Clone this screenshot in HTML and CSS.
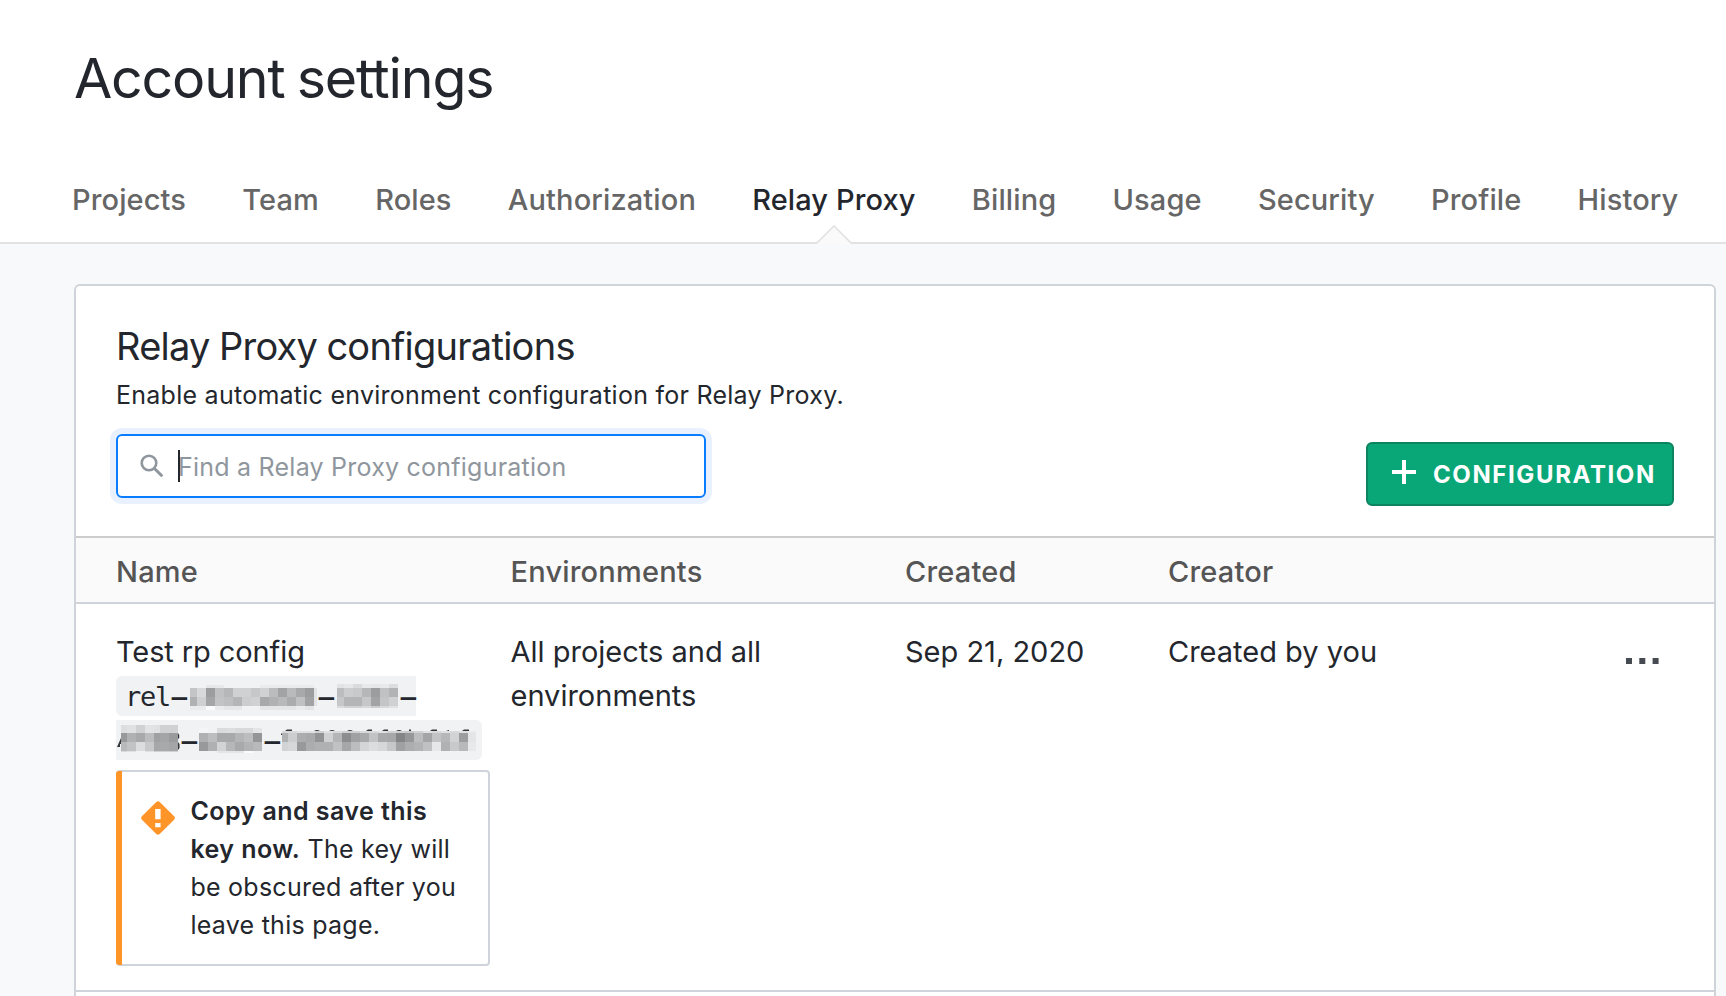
FILE: index.html
```html
<!DOCTYPE html>
<html lang="en">
<head>
<meta charset="utf-8">
<title>Account settings</title>
<link rel="stylesheet" href="styles.css">
</head>
<body>
<header class="header">
  <h1 class="title">Account settings</h1>
  <nav class="tabs">
    <a class="tab">Projects</a>
    <a class="tab">Team</a>
    <a class="tab">Roles</a>
    <a class="tab">Authorization</a>
    <a class="tab active">Relay Proxy
      <svg class="pointer" width="34" height="19" viewBox="0 0 34 19"><path d="M0 18.5 L17 1 L34 18.5 V19 H0Z" fill="#fafafa"/><path d="M0 18 L17 1 L34 18" fill="none" stroke="#e2e2e2" stroke-width="1.6"/></svg>
    </a>
    <a class="tab">Billing</a>
    <a class="tab">Usage</a>
    <a class="tab">Security</a>
    <a class="tab">Profile</a>
    <a class="tab">History</a>
  </nav>
</header>
<main class="main">
  <section class="card">
    <div class="card-top">
      <h2 class="card-title">Relay Proxy configurations</h2>
      <p class="card-sub">Enable automatic environment configuration for Relay Proxy.</p>
      <div class="toolbar">
        <div class="search">
          <svg class="search-icon" width="24" height="24" viewBox="0 0 24 24" fill="none" stroke="#8f969d"><circle cx="9" cy="9" r="7.3" stroke-width="2.6"/><path d="M14.2 14.2 L22.3 22.3" stroke-width="3"/></svg>
          <input class="search-input" type="text" placeholder="Find a Relay Proxy configuration">
          <span class="caret"></span>
        </div>
        <button class="button">
          <svg width="24" height="24" viewBox="0 0 24 24"><path d="M12 0V24M0 12H24" stroke="#fff" stroke-width="4"/></svg>
          <span>CONFIGURATION</span>
        </button>
      </div>
    </div>
    <div class="row head">
      <div>Name</div><div>Environments</div><div>Created</div><div>Creator</div><div></div>
    </div>
    <div class="row body">
      <div class="name">
        <div class="config">Test rp config</div>
        <div class="code first"><span class="mono">rel</span><span class="dash">-</span><svg class="mosaic m1" data-block="a"></svg><span class="dash">-</span><svg class="mosaic m2" data-block="b"></svg><span class="dash">-</span></div>
        <div class="code second"><svg class="mosaic m3" data-block="c"></svg><span class="dash">-</span><svg class="mosaic m4" data-block="d"></svg><span class="dash">-</span><svg class="mosaic m5" data-block="e"></svg></div>
        <div class="alert">
          <svg class="alert-icon" width="34" height="34" viewBox="0 0 34 34"><path d="M15.3 .9 Q17 -.6 18.7 .9 L33.1 15.3 Q34.6 17 33.1 18.7 L18.7 33.1 Q17 34.6 15.3 33.1 L.9 18.7 Q-.6 17 .9 15.3Z" fill="#ff9429"/><path d="M14.2 8h5.4v10.2h-5.4zM14.2 22h5.4v4.2h-5.4z" fill="#fff"/></svg>
          <p class="alert-text"><strong>Copy and save this key now.</strong> The key will be obscured after you leave this page.</p>
        </div>
      </div>
      <div class="envs">All projects and all environments</div>
      <div>Sep 21, 2020</div>
      <div>Created by you</div>
      <div class="more"><svg width="34" height="6" viewBox="0 0 34 6" fill="#454b51"><path d="M0 0h6v6H0zM13.3 0h6v6h-6zM26.6 0h6v6h-6z"/></svg></div>
    </div>
  </section>
</main>
<script src="mosaic.js"></script>
</body>
</html>
```
FILE: styles.css
```css
* { box-sizing: border-box; }
body {
  margin: 0;
  height: 996px;
  overflow: hidden;
  background: #f7f9fb;
  color: #23272d;
  font: 400 29px/44px Inter, sans-serif;
}
h1, h2, p { margin: 0; font-weight: 400; }
svg { display: block; flex: none; }
.header {
  height: 244px;
  padding: 48px 0 0 72px;
  background: #fff;
  border-bottom: 2px solid #e2e2e2;
}
.title { padding-left: 2px; font-size: 55.5px; line-height: 60px; letter-spacing: -1.2px; word-spacing: -2px; }
.tabs { display: flex; gap: 56.2px; margin-top: 72px; height: 62px; white-space: nowrap; }
.tab { position: relative; color: #666; font-weight: 500; line-height: 40px; letter-spacing: .12px; }
.tab.active { color: #23272d; }
.pointer { position: absolute; left: 50%; top: 45px; margin-left: -17px; }
.main { padding: 40px 10px 0 74px; }
.card {
  height: 740px;
  background: #fff;
  border: 2px solid #cfd4da;
  border-radius: 6px;
}
.card-top { height: 250px; padding: 38px 40px 0; }
.card-title { font-size: 38px; line-height: 44px; letter-spacing: -.73px; word-spacing: -.8px; }
.card-sub { margin-top: 8px; font-size: 25px; line-height: 38px; letter-spacing: .26px; }
.toolbar { display: flex; justify-content: space-between; margin-top: 20px; }
.search {
  position: relative;
  display: flex;
  align-items: center;
  width: 590px;
  height: 64px;
  padding-left: 22px;
  border: 2px solid #0a7cff;
  border-radius: 6px;
  box-shadow: 0 0 0 6px #e9f1ff;
}
.search-input {
  flex: 1;
  height: 60px;
  margin-left: 14px;
  padding: 1px 0 0;
  border: 0;
  outline: 0;
  background: none;
  font: 400 25px Inter, sans-serif;
  letter-spacing: .23px;
}
.search-input::placeholder { color: #8f969d; opacity: 1; }
.caret { position: absolute; left: 60px; top: 14px; width: 2px; height: 32px; background: #23272d; }
.button {
  display: flex;
  align-items: center;
  gap: 17px;
  width: 308px;
  height: 64px;
  margin-top: 8px;
  padding: 1px 0 0 24px;
  border: 2px solid #0d8460;
  border-radius: 6px;
  background: #09a778;
  color: #fff;
  font: 700 24px/30px Inter, sans-serif;
  letter-spacing: 1.6px;
}
.button svg { margin-top: -5px; }
.row { display: grid; grid-template-columns: 394.5px 394.5px 263px 1fr 90px; padding-left: 40px; }
.head {
  height: 68px;
  padding-top: 12px;
  border-top: 2px solid #ccc;
  border-bottom: 2px solid #cfd4da;
  background: #fafafa;
  color: #555;
  font-weight: 500;
  letter-spacing: .2px;
}
.body { padding-top: 26px; padding-bottom: 24px; border-bottom: 2px solid #cfd4da; }
.name { width: 374px; }
.config { letter-spacing: -.1px; }
.envs { width: 320px; }
.code { display: flex; height: 40px; background: #f1f2f4; }
.code.first { width: 300px; margin-top: 2px; padding-left: 9px; border-radius: 6px 0 0 6px; }
.code.second { width: 366px; margin-top: 4px; border-radius: 0 6px 6px 0; }
.mono, .dash { height: 38px; font: 27px/38px "DejaVu Sans Mono", monospace; letter-spacing: -1.2px; transform: translateY(2px); }
.mono { width: 47px; }
.dash {
  display: flex;
  justify-content: center;
  width: 15px;
  margin: 0 1px 0 2px;
  letter-spacing: 0;
  transform: translateY(2px) scaleX(1.85);
  font-size: 33px;
}
.mosaic { height: 40px; }
.m1 { width: 127px; margin-left: 2px; }
.m2 { width: 62px; margin-left: 2px; }
.m3 { width: 64px; }
.m4 { width: 64px; margin-left: 1px; }
.m5 { width: 200px; }
.alert {
  position: relative;
  display: flex;
  height: 196px;
  margin-top: 10px;
  padding: 20px 20px 0 23px;
  border: 2px solid #cfd4da;
  border-radius: 4px;
}
.alert::before {
  content: "";
  position: absolute;
  left: -2px;
  top: -1px;
  bottom: -1px;
  width: 6px;
  border-radius: 3px 0 0 3px;
  background: #ff9429;
}
.alert-icon { margin-top: 9px; }
.alert-text { margin-left: 15.4px; font-size: 25px; line-height: 38px; letter-spacing: .26px; }
.alert-text strong { font-weight: 600; letter-spacing: .45px; }
.more { padding: 28px 0 0 2px; }
```
FILE: mosaic.js
```js
// Redaction blocks: column edges, row edges, and one grey level (hex pair) per cell.
const blocks = {
  a: {
    x: [0, 7, 16, 25, 34, 43, 52, 61, 70, 79, 88, 97, 106, 115, 124, 127],
    y: [9, 12, 21, 30, 34],
    g: ["f1 f1 e6 e8 f1 f1 f1 f1 ea ea ea ea ea ea f1",
        "c4 d8 9c c0 b6 d0 d0 c6 d0 bb a2 b9 a8 9c e2",
        "b0 cf a4 c2 be b4 cc d0 a8 b0 b8 ab c0 a2 e2",
        "ea ea fa ea e4 e6 f1 f1 e4 e4 e4 e4 ea e4 f1"]
  },
  b: {
    x: [0, 7, 16, 25, 34, 43, 52, 61],
    y: [8, 12, 21, 30, 32],
    g: ["e2 e6 da e8 e6 e8 dc", "bc cc c8 b6 9c c0 b2", "c6 b4 b4 c6 a2 c4 d0", "da d0 d0 d8 cc d8 e0"]
  },
  c: {
    x: [5, 11, 20, 29, 38, 44, 53, 62],
    y: [5, 13, 22, 31, 32],
    g: ["dc e0 d0 e2 e0 d0 d0", "98 b0 a8 bc a0 a4 9a", "b8 c2 dc c8 a6 a8 a4", "d8 e0 f1 e0 d0 d0 d0"]
  },
  d: {
    x: [0, 9, 18, 27, 36, 45, 54, 63],
    y: [8, 13, 22, 31, 33],
    g: ["f4 f1 da dc d8 d8 e4", "b0 bc a8 a8 b4 bc 94", "98 b0 d2 b6 a8 b2 b8", "f1 f1 e4 e4 e4 fa f1"]
  },
  e: {
    x: [1, 7, 16, 25, 34, 43, 52, 61, 70, 79, 88, 97, 106, 115, 124, 133, 142, 151, 160, 169, 178, 187, 195],
    y: [11, 13, 22, 31],
    g: ["d8 d8 e0 e0 d0 e0 d8 d0 d0 d8 d8 e0 d0 d0 c8 d0 e0 d8 e0 d8 e0 e8",
        "b0 cc ac a8 92 d0 b4 8c a0 a8 c2 a8 a6 84 96 bc a4 c2 b6 d2 9c e4",
        "d2 d6 98 ac b0 b0 c0 a6 bc d4 dc d6 c6 a0 ac b2 c0 e6 b0 c8 b8 e8"]
  }
};
// Glyph edges that stay visible around the redaction blocks.
const edges = {
  c: "M1 27 L5 18 V24 H4 V27Z M62 13 l1.2 2 v3 l-1.2 1z M62 22 l1.5 2 v4 l-1.5 2z",
  e: "M0 15 v-1.5 h1 v1.5z M4 11 l2-1.5 h5 v1.5z M33 11 q3 -2 6 0z M48 11 q3 -2 6 0z M66 11 q3 -2 6 0z M85 11 l2-1.5 h4 v1.5z M101 11 l2-1.5 h4 v1.5z M115 11 q3 -2 6 0z M128 11 v-1.5 h2 v1.5z M149 11 l2-1.5 h5 v1.5z M165 11 l3-1 v1z M181 11 l2-1.5 h5 v1.5z"
};
for (const svg of document.querySelectorAll(".mosaic")) {
  const id = svg.dataset.block;
  const { x, y, g } = blocks[id];
  let out = edges[id] ? `<path d="${edges[id]}" fill="#33373c"/>` : "";
  g.forEach((line, r) => line.split(" ").forEach((v, c) => {
    const n = parseInt(v, 16);
    out += `<rect x="${x[c]}" y="${y[r]}" width="${x[c + 1] - x[c]}" height="${y[r + 1] - y[r]}" fill="rgb(${n},${Math.min(255, n + 1)},${Math.min(255, n + 3)})"/>`;
  }));
  svg.innerHTML = out;
}
```
